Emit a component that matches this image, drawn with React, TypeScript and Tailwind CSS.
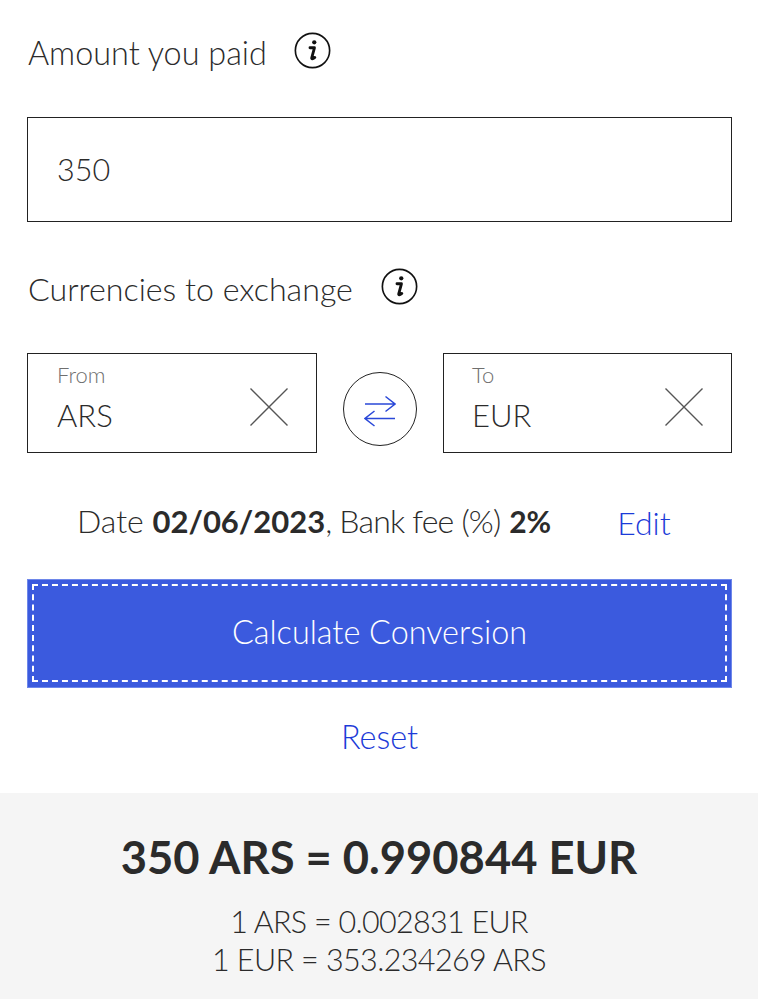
const font = { fontFamily: 'Lato, sans-serif' };

function Info() {
  return (
    <svg width="37" height="37" viewBox="0 0 38 38" fill="none" className="shrink-0">
      <circle cx="19" cy="19" r="17.6" stroke="#111" strokeWidth="1.7" />
      <circle cx="20.8" cy="10.6" r="2.2" fill="#111" />
      <path d="M16.4 16.2h4.6l-2.8 10.4c-.3 1.2.9 1.5 3.2-.5" stroke="#111" strokeWidth="2.9" strokeLinecap="round" strokeLinejoin="round" />
    </svg>
  );
}

function Cross() {
  return (
    <svg width="38" height="38" viewBox="0 0 38 38" fill="none" className="shrink-0">
      <path d="M0.5 0.5L37.5 37.5M37.5 0.5L0.5 37.5" stroke="#555" strokeWidth="1.4" />
    </svg>
  );
}

function Select({ label, value, width, inset }: { label: string; value: string; width: string; inset: string }) {
  return (
    <div className={`flex h-[100px] ${width} ${inset} items-center justify-between border-[1.5px] border-[#222] pr-[28px]`}>
      <div className="-mt-[11px] flex flex-col">
        <span className="-mt-[1px] text-[22px] leading-[28px] font-light text-[#6f6f6f]">{label}</span>
        <span className="mt-[7px] text-[31px] leading-[38px] font-light text-[#2b2b2b]">{value}</span>
      </div>
      <div className="mt-[7px]">
        <Cross />
      </div>
    </div>
  );
}

export default function App() {
  return (
    <div style={font} className="h-[999px] w-[758px] overflow-hidden bg-white text-[#2b2b2b]">
      <div className="flex flex-col pl-[27px] pr-[26px]">
        <div className="flex h-[105px] items-center pl-[1px]">
          <span className="text-[32.4px] leading-[38px] font-light">Amount you paid</span>
          <span className="ml-[27px] -mt-[4px]"><Info /></span>
        </div>
        <div className="mt-[12px] flex h-[105px] items-center border-[1.5px] border-[#222] pl-[29px] text-[30.5px] font-light">
          350
        </div>
        <div className="mt-[37px] flex h-[60px] items-center pl-[1px]">
          <span className="text-[32.2px] leading-[38px] font-light">Currencies to exchange</span>
          <span className="ml-[28px] -mt-[6px]"><Info /></span>
        </div>
        <div className="mt-[34px] flex justify-between">
          <Select label="From" value="ARS" width="w-[290px]" inset="pl-[29px]" />
          <div className="mt-[19px] flex size-[74px] items-center justify-center rounded-full border-[1.5px] border-[#222]">
            <svg width="32" height="36" viewBox="0 0 32 36" fill="none">
              <path d="M1 13H31M21.5 5.5L31 13L21.5 20.5M31 27.5H1M10.5 20L1 27.5L10.5 35" stroke="#2a48d8" strokeWidth="1.5" />
            </svg>
          </div>
          <Select label="To" value="EUR" width="w-[289px]" inset="pl-[28px]" />
        </div>
        <div className="mt-[47px] flex h-[46px] items-center pl-[50px] text-[32px]">
          <span className="-mt-[4px] font-light whitespace-nowrap">
            Date <b className="text-[31px] font-bold">02/06/2023</b>
            <span className="tracking-[-0.8px]">, Bank fee (%)</span> <b className="text-[30px] font-bold">2%</b>
          </span>
          <span className="ml-[66px] font-light text-[#1c3bd8]">Edit</span>
        </div>
        <button style={font} className="mt-[33px] h-[109px] w-full bg-[#3b5ade] px-[5px] pt-[5px] pb-[6px] outline outline-[1px] -outline-offset-1 outline-[#6e87ea]">
          <span className="flex h-full w-full items-center justify-center border-[2px] border-dashed border-white pb-[1px] text-[32.4px] font-light text-white">
            Calculate Conversion
          </span>
        </button>
        <div className="mt-[29px] flex h-[40px] items-center justify-center text-[32.4px] font-light text-[#1c3bd8]">Reset</div>
      </div>
      <div className="mt-[36px] flex h-[206px] flex-col items-center bg-[#f5f5f5] pt-[36px]">
        <div className="text-[45.3px] leading-[56px] font-bold text-[#2b2b2b]">350 ARS = 0.990844 EUR</div>
        <div className="mt-[17px] text-[30.5px] leading-[38px] font-light tracking-[-0.7px]">1 ARS = 0.002831 EUR</div>
        <div className="text-[30.5px] leading-[38px] font-light tracking-[-0.6px]">1 EUR = 353.234269 ARS</div>
      </div>
    </div>
  );
}
